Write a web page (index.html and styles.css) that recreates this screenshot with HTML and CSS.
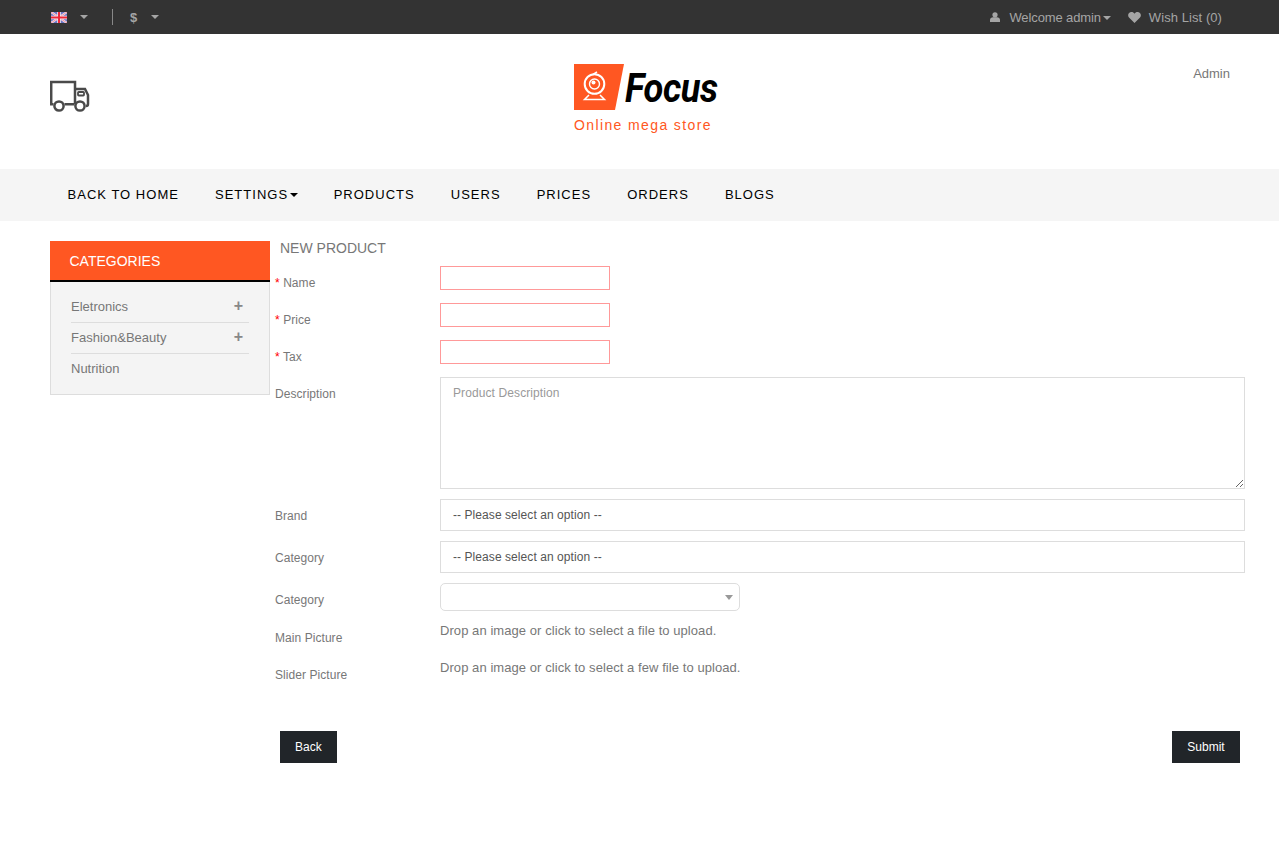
FILE: index.html
```html
<!DOCTYPE html>
<html lang="en">
<head>
<meta charset="utf-8">
<title>New Product</title>
<link rel="stylesheet" href="styles.css">
</head>
<body>
<div class="topbar">
  <div class="top-left">
    <svg class="flag" viewBox="0 0 16 11" width="16" height="11">
      <rect width="16" height="11" fill="#6a74c4"/>
      <path d="M0 0L16 11M16 0L0 11" stroke="#f2e6ee" stroke-width="2.200"/>
      <path d="M0 0L16 11M16 0L0 11" stroke="#f07a8a" stroke-width=".8"/>
      <path d="M8 0V11M0 5.500H16" stroke="#f2e6ee" stroke-width="3.600"/>
      <path d="M8 0V11M0 5.500H16" stroke="#f02838" stroke-width="2"/>
    </svg>
    <span class="caret caret-flag"></span>
    <span class="divider"></span>
    <span class="currency">$</span>
    <span class="caret caret-cur"></span>
  </div>
  <div class="top-right">
    <svg class="ico-user" viewBox="0 0 10 10" width="10" height="10"><circle cx="5" cy="2.800" r="2.600" fill="#a5a5a5"/><path d="M0 10V8C0 6.300 1.500 5.500 3 5.300H7C8.500 5.500 10 6.300 10 8V10Z" fill="#a5a5a5"/></svg>
    <span class="top-link welcome">Welcome admin</span><span class="caret caret-small"></span>
    <svg class="ico-heart" viewBox="0 0 13 11" width="13" height="11"><path d="M6.500 11L1 5.600C-.6 3.800 0 .6 3 .1 4.500-.1 5.800.6 6.500 1.800 7.200.6 8.500-.1 10 .1 13 .6 13.600 3.800 12 5.600Z" fill="#a5a5a5"/></svg>
    <span class="top-link wish">Wish List (0)</span>
  </div>
</div>

<header class="header">
  <svg class="truck" viewBox="0 0 40 32" width="40" height="32" fill="none" stroke="#4a4a4a" stroke-width="2.500">
    <path d="M1.200 24V2H25V24"/>
    <path d="M25 9H35L38 15V24C38 25.500 37.500 26 36 26"/>
    <path d="M0 24.200H3.500M14.500 24.200H24.500"/>
    <rect x="28" y="12" width="6" height="3.500" rx=".8" stroke-width="1.800"/>
    <circle cx="9" cy="26" r="4.600"/>
    <circle cx="30" cy="26" r="4.600"/>
  </svg>
  <div class="brand">
    <div class="logo-row">
      <svg class="logo-mark" viewBox="0 0 50 46" width="50" height="46">
        <path d="M0 0H50L41 46H0Z" fill="#ff5722"/>
        <g fill="none" stroke="#fff">
          <circle cx="20.500" cy="20" r="9.800" stroke-width="2"/>
          <circle cx="20.500" cy="20" r="5" stroke-width="1.400"/>
          <path d="M15 31L10.500 35.500H30.500L26 31" stroke-width="1.500"/>
        </g>
        <circle cx="19.500" cy="18.500" r="2" fill="#fff"/>
        <path d="M19 10.500L23 8" stroke="#fff" stroke-width="1.500"/>
      </svg>
      <span class="logo-text">Focus</span>
    </div>
    <div class="tagline">Online mega store</div>
  </div>
  <a class="admin-link">Admin</a>
</header>

<nav class="nav">
  <a>BACK TO HOME</a>
  <a>SETTINGS<span class="caret caret-nav"></span></a>
  <a>PRODUCTS</a>
  <a>USERS</a>
  <a>PRICES</a>
  <a>ORDERS</a>
  <a>BLOGS</a>
</nav>

<main class="main">
  <aside class="sidebar">
    <h2 class="side-title">CATEGORIES</h2>
    <ul class="side-list">
      <li><span>Eletronics</span><b class="plus">+</b></li>
      <li><span>Fashion&amp;Beauty</span><b class="plus">+</b></li>
      <li><span>Nutrition</span></li>
    </ul>
  </aside>
  <section class="content">
    <h3 class="form-title">NEW PRODUCT</h3>
    <div class="row row-small"><label><i>*</i> Name</label><input class="req" type="text"></div>
    <div class="row row-small"><label><i>*</i> Price</label><input class="req" type="text"></div>
    <div class="row row-small"><label><i>*</i> Tax</label><input class="req" type="text"></div>
    <div class="row row-area"><label>Description</label><textarea placeholder="Product Description"></textarea></div>
    <div class="row row-select"><label>Brand</label><div class="select">-- Please select an option --</div></div>
    <div class="row row-select"><label>Category</label><div class="select">-- Please select an option --</div></div>
    <div class="row row-chosen"><label>Category</label><div class="chosen"><span class="caret caret-chosen"></span></div></div>
    <div class="row row-drop"><label>Main Picture</label><p>Drop an image or click to select a file to upload.</p></div>
    <div class="row row-drop"><label>Slider Picture</label><p>Drop an image or click to select a few file to upload.</p></div>
    <div class="actions"><button class="btn">Back</button><button class="btn btn-submit">Submit</button></div>
  </section>
</main>
</body>
</html>
```

FILE: styles.css
```css
* { box-sizing: border-box; }
html, body { margin: 0; padding: 0; }
body { font-family: "Liberation Sans", Arial, sans-serif; font-size: 12px; color: #777; background: #fff; height: 841px; overflow: hidden; }

.topbar { height: 34px; background: #333; display: flex; justify-content: space-between; align-items: center; padding: 0 57px 0 50px; }
.top-left, .top-right { display: flex; align-items: center; }
.flag { margin-left: 1px; }
.caret { display: inline-block; width: 0; height: 0; border-style: solid; border-color: #a5a5a5 transparent transparent; border-width: 4px 4px 0; }
.caret-flag { margin-left: 13px; }
.divider { width: 1px; height: 16px; background: #888; margin-left: 24px; }
.currency { color: #a5a5a5; font-size: 13px; font-weight: 700; margin-left: 17px; }
.caret-cur { margin-left: 14px; }
.top-link { color: #a5a5a5; font-size: 13px; }
.welcome { letter-spacing: -.12px; }
.wish { letter-spacing: .07px; }
.ico-user { margin-right: 9px; }
.caret-small { margin-left: 2px; margin-top: 1px; }
.ico-heart { margin: 0 8px 0 17px; }

.header { height: 135px; position: relative; display: flex; justify-content: space-between; padding: 0 49px 0 50px; }
.truck { margin-top: 46px; }
.brand { position: absolute; left: 574px; top: 30px; }
.logo-row { display: flex; align-items: center; height: 46px; }
.logo-text { font-family: Roboto, "Liberation Sans", sans-serif; font-weight: 700; font-style: italic; font-size: 41px; color: #000; margin: 2px 0 0 1px; letter-spacing: -.5px; display: inline-block; transform: scaleX(.885); transform-origin: left center; }
.tagline { color: #ff5722; font-size: 14px; letter-spacing: 1.380px; margin-top: 8px; line-height: 15px; }
.admin-link { color: #777; font-size: 13px; margin-top: 32px; line-height: 15px; }

.nav { height: 52px; background: #f5f5f5; display: flex; align-items: center; gap: 36px; padding: 0 0 2px 67.500px; }
.nav a { color: #000; font-size: 13px; letter-spacing: 1.020px; display: flex; align-items: center; }
.caret-nav { border-color: #000 transparent transparent; margin-left: 1.500px; margin-top: 2px; }

.main { display: flex; padding: 20px 34px 0 50px; }
.sidebar { width: 220px; flex: none; }
.side-title { margin: 0; height: 41px; background: #ff5722; color: #fff; font-size: 14px; font-weight: 400; line-height: 40px; padding-left: 19.500px; border-bottom: 2px solid #000; }
.side-list { list-style: none; margin: 0; padding: 10px 20px 10px 20px; background: #f4f4f4; border: 1px solid #ddd; border-top: 0; height: 113px; }
.side-list li { display: flex; justify-content: space-between; align-items: center; height: 31px; padding-bottom: 2px; border-bottom: 1px solid #ddd; font-size: 13px; color: #777; }
.side-list li:last-child { border-bottom: 0; padding-bottom: 3px; }
.plus { color: #888; font-size: 16px; font-weight: 700; margin-right: 6px; margin-top: -1px; }

.content { flex: 1; padding-left: 5px; position: relative; }
.form-title { margin: 0 0 0 5px; font-size: 14px; font-weight: 400; color: #777; height: 25px; line-height: 15px; }
.row { display: flex; align-items: flex-start; }
.row label { width: 165px; flex: none; font-size: 12px; color: #777; letter-spacing: .06px; }
.row label i { color: #f00; font-style: normal; }
.row-small { height: 37px; }
.row-small label { padding-top: 10px; }
.row input { width: 170px; height: 24px; border: 1px solid #ddd; background: #fff; margin: 0; padding: 0; }
.row input.req { border-color: #f99; }
.row-area { height: 122px; }
.row-area label { padding-top: 10px; }
textarea { width: 805px; height: 112px; border: 1px solid #ddd; padding: 8px 12px; font-family: inherit; font-size: 12px; letter-spacing: .1px; margin: 0; display: block; }
textarea::placeholder { color: #999; opacity: 1; }
.row-select { height: 42px; }
.row-select label { padding-top: 10px; }
.select { width: 805px; height: 32px; border: 1px solid #ddd; padding-left: 12px; line-height: 30px; color: #555; font-size: 12px; letter-spacing: .07px; }
.row-chosen { height: 40px; }
.row-chosen label { padding-top: 10px; }
.chosen { width: 300px; height: 28px; border: 1px solid #ddd; border-radius: 5px; position: relative; }
.caret-chosen { position: absolute; right: 6px; top: 11px; border-width: 5px 4px 0; border-top-color: #999; }
.row-drop { height: 37px; }
.row-drop label { padding-top: 8px; }
.row-drop p { margin: 0; font-size: 13px; line-height: 15px; color: #777; letter-spacing: .065px; }
.actions { display: flex; justify-content: space-between; margin: 34px 5px 0 5px; }
.btn { height: 32px; background: #212529; color: #fff; border: 0; font-family: inherit; font-size: 12px; padding: 0 15px; margin: 0; }
.btn-submit { width: 68px; padding: 0; }
```
